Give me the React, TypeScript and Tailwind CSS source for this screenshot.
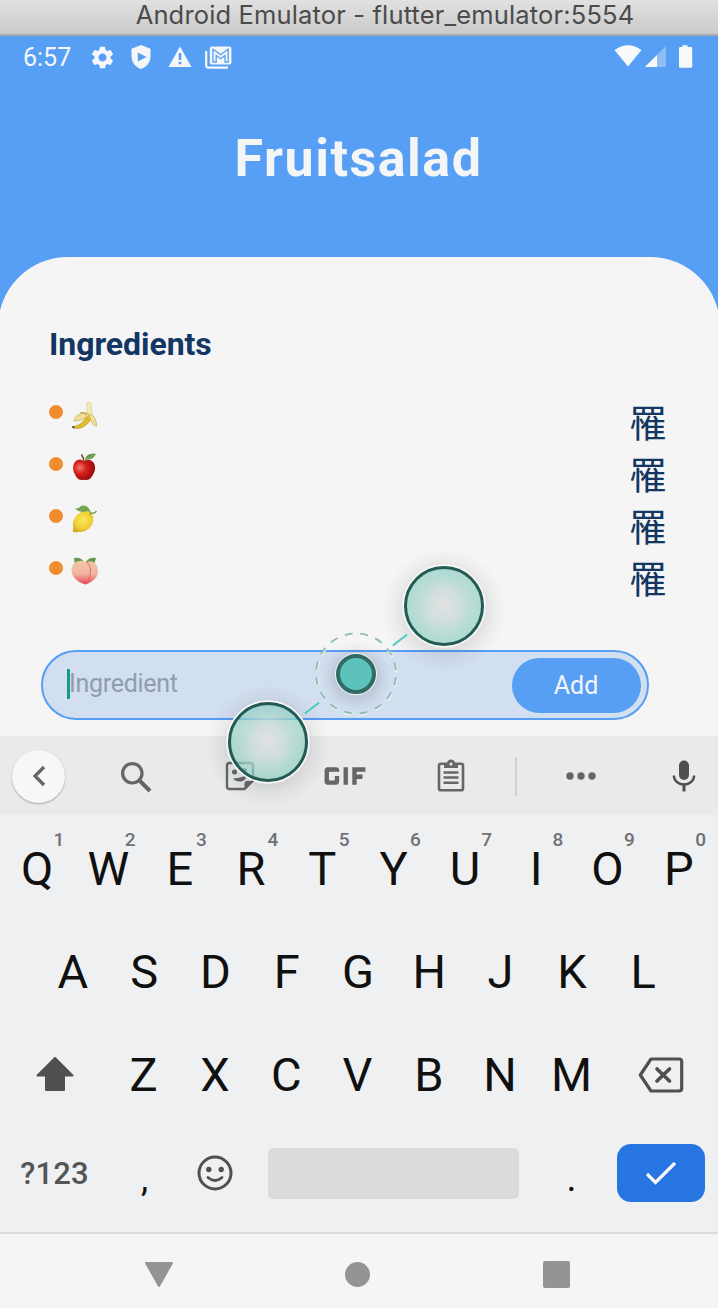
import React from "react";
import { MdSettings, MdGif } from "react-icons/md";

function Shield() {
  return (
    <svg width="22" height="26" viewBox="0 0 22 26">
      <path fillRule="evenodd" fill="#f4f6f8" d="M11 1 L20.5 4.8 V12 C20.5 18.5 16.5 23 11 25 C5.5 23 1.5 18.5 1.5 12 V4.8 Z M7.8 8.5 V17.5 L16.5 13 Z" />
    </svg>
  );
}

function Warning() {
  return (
    <svg width="24" height="22" viewBox="0 0 24 22">
      <path fill="#f4f6f8" d="M12 0.5 L23.5 21 H0.5 Z" />
      <path fill="#579ff5" d="M10.7 7 h2.6 v7 h-2.6 z M10.7 15.8 h2.6 v2.5 h-2.6 z" />
    </svg>
  );
}

function MailStack() {
  return (
    <svg width="27" height="23" viewBox="0 0 27 23" fill="none">
      <path d="M1.2 5 V19.5 Q1.2 21.7 3.4 21.7 H23" stroke="#f4f6f8" strokeWidth="2.2" />
      <rect x="4.8" y="0.5" width="21.6" height="18" rx="2" fill="#f4f6f8" />
      <path d="M8 16 V3.2 L15.6 8.8 L23.200 3.2 V16 H20 V9.500 L15.6 12.800 L11.200 9.500 V16 Z" stroke="#579ff5" strokeWidth="1.3" />
    </svg>
  );
}

function SignalIcons() {
  return (
    <svg width="80" height="26" viewBox="0 0 80 26" fill="#f8f9fa">
      <path d="M0.5 6 Q14 -3.5 27.5 6 L14 22.5 Z" />
      <path d="M31 23 L52 2 V23 Z" opacity="0.35" />
      <path d="M31 23 L43 11 V23 Z" />
      <path d="M68.5 1.3 h5 v1.7 h3.3 q1.4 0 1.4 1.4 v18 q0 1.4 -1.4 1.4 h-10.4 q-1.4 0 -1.4 -1.4 v-18 q0 -1.4 1.4 -1.4 h2.1 z" />
    </svg>
  );
}

function Banana() {
  return (
    <svg width="28" height="28" viewBox="0 0 28 28">
      <path d="M2 25.5 C10 25 14 19 18 11 L21 15 C19 22 11 30 2 26.8 Z" fill="#e3bd2c" stroke="#b08c22" strokeWidth=".6" />
      <path d="M16 1.6 Q18.3 0 20 2.3 L21 15 L15.8 14.5 Q16.5 8 16 1.6Z" fill="#f5eab0" stroke="#d8c875" strokeWidth=".6" />
      <path d="M17 12 Q11 11 7 14 Q3.5 16 3 20 Q9 20.5 14 17 L18.5 14Z" fill="#efdf96" stroke="#bda443" strokeWidth=".6" />
      <path d="M20 13 Q25 16 26 25.5 Q21 24.5 20 19 L18 15Z" fill="#eee09c" stroke="#c8ad4b" strokeWidth=".6" />
      <path d="M1.5 25 l2 .2 -.5 2 -1.7 -.3z" fill="#473a1c" />
      <path d="M9 12 Q13 10 16 14" fill="none" stroke="#b69632" />
    </svg>
  );
}

function Apple() {
  return (
    <svg width="28" height="28" viewBox="0 0 28 28">
      <defs>
        <radialGradient id="appleSkin" cx=".32" cy=".4" r=".7">
          <stop offset="0" stopColor="#ec7d75" />
          <stop offset=".4" stopColor="#d8211d" />
          <stop offset="1" stopColor="#930808" />
        </radialGradient>
      </defs>
      <path d="M12.5 8 Q7 4.500 3.500 9.500 Q-.2 16 5 23.500 Q7.500 27.800 12.500 26.700 Q18 28 20.500 24 Q26.500 15.500 22.500 9.500 Q19 4.700 12.500 8Z" fill="url(#appleSkin)" />
      <path d="M12.700 9.500 Q13 5 10.500 1.500" fill="none" stroke="#6d4428" strokeWidth="1.500" />
      <path d="M13.500 6.700 Q16 -.5 25 .8 Q22.500 7.500 13.500 6.700Z" fill="#639845" />
      <path d="M14 6.500 Q19 4.500 24 1.200" fill="none" stroke="#a4c78c" strokeWidth=".6" />
    </svg>
  );
}

function Lemon() {
  return (
    <svg width="28" height="28" viewBox="0 0 28 28">
      <defs>
        <radialGradient id="lemonSkin" cx=".5" cy=".42" r=".6">
          <stop offset="0" stopColor="#fae85e" />
          <stop offset=".7" stopColor="#efce32" />
          <stop offset="1" stopColor="#d6a81f" />
        </radialGradient>
      </defs>
      <path d="M20.500 7 Q25 17 18 23.500 Q13 28 8 26.800 Q5 27.800 2 26.800 Q1.500 25.500 2.300 23.500 Q.5 15 6.500 9.500 Q12 4.500 20.500 7Z" fill="url(#lemonSkin)" />
      <path d="M20 7.500 Q17 -.5 10.500 .8 Q8 3.500 4 3.700 Q9 8.500 14.500 6.500 Q17 5.500 20 7.500Z" fill="#77a554" />
      <path d="M19 7.500 Q23 9.500 25.500 6" fill="none" stroke="#77a554" strokeWidth="1.300" />
      <path d="M20 7.500 L18.500 10" stroke="#77a554" />
    </svg>
  );
}

function Peach() {
  return (
    <svg width="28" height="28" viewBox="0 0 28 28">
      <defs>
        <linearGradient id="peachSkin" x1="0" y1="0" x2="0" y2="1">
          <stop offset="0" stopColor="#f0c7a0" />
          <stop offset=".55" stopColor="#f0b5a2" />
          <stop offset="1" stopColor="#ea4055" />
        </linearGradient>
      </defs>
      <path d="M3 1 Q10 -.5 14 6 L4 8Z M25 1 Q18 0 15 5 L23 8Z" fill="#66984c" />
      <path d="M14 6 Q19 2.500 24 6 Q29 11 26 19 Q22 25 14.500 27.500Z" fill="url(#peachSkin)" />
      <path d="M15 5 Q9 2.500 4 5.500 Q-.8 10 1 17 Q5 25 14.500 27.500 Q19.500 22 19.500 14 Q19.500 7 15 5Z" fill="url(#peachSkin)" />
      <path d="M15 5 Q20 7.500 19.500 15 Q19 23 15 27" fill="none" stroke="#d8656a" strokeWidth=".9" />
    </svg>
  );
}

function SearchIcon() {
  return (
    <svg className="relative top-px" width="32" height="32" viewBox="0 0 32 32" fill="none" stroke="#656667" strokeWidth="3.2">
      <circle cx="12.300" cy="12.300" r="9.700" />
      <path d="M19.500 19.500 L30 30" strokeWidth="4" />
    </svg>
  );
}

function StickerIcon() {
  return (
    <svg width="30" height="30" viewBox="0 0 30 30">
      <path d="M4.500 2 H25 Q28 2 28 5 V19.500 L19.500 28 H4.500 Q2 28 2 25.500 V4.500 Q2 2 4.500 2Z" fill="none" stroke="#656667" strokeWidth="2.400" />
      <path d="M19.500 29 V22.500 Q19.500 20 22 20 H29Z" fill="#656667" />
      <circle cx="9.500" cy="11" r="2.500" fill="#656667" />
      <circle cx="19.500" cy="9.500" r="2.500" fill="#656667" />
      <path d="M8 17.500 Q15 17 22 14.500 Q20 20.500 15 20.500 Q10 20.500 8 17.500Z" fill="#656667" />
    </svg>
  );
}

function ClipboardIcon() {
  return (
    <svg width="28" height="34" viewBox="0 0 28 34">
      <rect x="2" y="4.800" width="24" height="26.500" rx="1.800" fill="none" stroke="#656667" strokeWidth="2.600" />
      <path d="M7 4 H10 Q10.500 .5 14 .5 Q17.500 .5 18 4 H21 V9 H7Z" fill="#656667" />
      <circle cx="14" cy="5" r="1.500" fill="#e8eaeb" />
      <path d="M6.500 13.400 H21.500 M6.500 18.600 H21.500 M6.500 23.800 H21.500" stroke="#656667" strokeWidth="2.500" />
    </svg>
  );
}

function MicIcon() {
  return (
    <svg width="24" height="32" viewBox="0 0 24 32" fill="none" stroke="#505050">
      <rect x="7" y="0.500" width="10" height="19.500" rx="5" fill="#505050" stroke="none" />
      <path d="M1.800 15.500 C2.500 27.500 21.500 27.500 22.200 15.500" strokeWidth="2.400" />
      <path d="M12 24 V31.500" strokeWidth="3" />
    </svg>
  );
}

function Toolbar() {
  return (
    <div className="grid h-[79px] shrink-0 grid-cols-[77px_117px_92px_118px_94px_35px_95px_21px_69px] items-center justify-items-center bg-[#e8eaeb] pt-px">
      <div className="flex h-[53px] w-[53px] items-center justify-center rounded-full bg-[#f7f7f7] shadow-[0_1px_2px_rgba(0,0,0,0.3)]">
        <svg width="14" height="22" viewBox="0 0 14 22" fill="none" stroke="#656667" strokeWidth="3.300">
          <path d="M12 2 L3 11 L12 20" />
        </svg>
      </div>
      <SearchIcon />
      <StickerIcon />
      <MdGif size={70} color="#656667" />
      <ClipboardIcon />
      <div className="h-[39px] w-[2px] bg-[#cfd1d2]" />
      <svg width="30" height="8" viewBox="0 0 30 8" fill="#656667">
        <circle cx="4" cy="4" r="3.700" />
        <circle cx="15" cy="4" r="3.700" />
        <circle cx="26" cy="4" r="3.700" />
      </svg>
      <span />
      <MicIcon />
    </div>
  );
}

function Key({ label, hint }: { label: string; hint?: string }) {
  return (
    <div className="relative flex h-full w-[71.3px] items-center justify-center text-[47px] leading-none text-[#101010]">
      {label}
      {hint && <span className="absolute left-[52px] top-[11px] text-[19px] font-medium leading-[24px] text-[#707172]">{hint}</span>}
    </div>
  );
}

function Keyboard() {
  return (
    <div className="flex h-[417px] shrink-0 flex-col bg-[#eef0f2] pt-[2px]">
      <div className="flex h-[103px] justify-center pr-[2px]">
        {"QWERTYUIOP".split("").map((k, i) => (
          <Key key={k} label={k} hint={String((i + 1) % 10)} />
        ))}
      </div>
      <div className="flex h-[103px] justify-center pr-[2px]">
        {"ASDFGHJKL".split("").map((k) => (
          <Key key={k} label={k} />
        ))}
      </div>
      <div className="flex h-[103px] items-center">
        <div className="flex w-[108px] justify-center pl-[1px]">
          <svg width="38" height="36" viewBox="0 0 38 36" fill="#505050" stroke="#505050" strokeWidth="2" strokeLinejoin="round">
            <path d="M19 1 L36.500 18.500 H28 V33 H10 V18.500 H1.500 Z" />
          </svg>
        </div>
        {"ZXCVBNM".split("").map((k) => (
          <Key key={k} label={k} />
        ))}
        <div className="flex flex-1 justify-center pr-[3px]">
          <svg width="46" height="36" viewBox="0 0 46 36" fill="none" stroke="#505050" strokeWidth="3.200" strokeLinejoin="round">
            <path d="M13 2 H41 Q43.700 2 43.700 4.700 V31.300 Q43.700 34 41 34 H13 L2.300 18 Z" />
            <path d="M19 12 L31.500 24 M31.500 12 L19 24" strokeWidth="3.700" strokeLinecap="round" />
          </svg>
        </div>
      </div>
      <div className="flex h-[94px] items-center">
        <div className="w-[109px] pt-[2px] text-center text-[31px] font-medium tracking-[0.1px] text-[#555]">?123</div>
        <div className="w-[71px] pt-[11px] text-center text-[36px] leading-none text-[#101010]">,</div>
        <div className="flex w-[70px] justify-center">
          <svg width="36" height="36" viewBox="0 0 36 36" fill="none" stroke="#505050" strokeWidth="3">
            <circle cx="18" cy="18" r="16" />
            <circle cx="11.800" cy="14.500" r="2.700" fill="#505050" stroke="none" />
            <circle cx="24.200" cy="14.500" r="2.700" fill="#505050" stroke="none" />
            <path d="M11 22.500 Q18 28.500 25 22.500" strokeLinecap="round" strokeWidth="2.800" />
          </svg>
        </div>
        <div className="ml-[18px] h-[51px] w-[251px] rounded-[5px] bg-[#dadcdb]" />
        <div className="w-[98px] pl-[7px] pt-[10px] text-center text-[38px] leading-none text-[#101010]">.</div>
        <div className="flex h-[58px] w-[88px] items-center justify-center rounded-[14px] bg-[#2775e1]">
          <svg width="32" height="24" viewBox="0 0 32 24" fill="none" stroke="#f7f9fb" strokeWidth="3.200">
            <path d="M2 13 L10.500 21.500 L30 2" />
          </svg>
        </div>
      </div>
    </div>
  );
}

function TouchOverlay() {
  return (
    <svg className="pointer-events-none absolute left-[190px] top-[530px]" width="340" height="290" viewBox="190 530 340 290" fill="none">
      <defs>
        <radialGradient id="touchFill">
          <stop offset="0" stopColor="#e0e0e2" stopOpacity=".95" />
          <stop offset=".45" stopColor="#c9dcd9" stopOpacity=".88" />
          <stop offset="1" stopColor="#86cdbf" stopOpacity=".65" />
        </radialGradient>
        <radialGradient id="touchShade">
          <stop offset=".6" stopColor="#24252b" stopOpacity=".11" />
          <stop offset=".8" stopColor="#24252b" stopOpacity=".04" />
          <stop offset="1" stopColor="#24252b" stopOpacity="0" />
        </radialGradient>
        <mask id="shadeMask">
          <rect x="190" y="530" width="340" height="290" fill="white" />
          <circle cx="444" cy="606" r="39" fill="black" />
          <circle cx="268" cy="742" r="39" fill="black" />
        </mask>
      </defs>
      <g mask="url(#shadeMask)">
        <circle cx="444" cy="610" r="62" fill="url(#touchShade)" />
        <circle cx="268" cy="746" r="62" fill="url(#touchShade)" />
      </g>
      <circle cx="356" cy="677" r="36" fill="url(#touchShade)" />
      <circle cx="356.500" cy="674.500" r="40" stroke="#f5f5f5" strokeWidth="3" strokeDasharray="8.500 7.260" strokeDashoffset="-4" opacity=".7" />
      <circle cx="356" cy="673.500" r="40" stroke="#8dbab2" strokeWidth="1.800" strokeDasharray="8 7.708" strokeDashoffset="-4" />
      <path d="M393.500 645 L406.500 635 M305.500 713 L318.500 703" stroke="#4bcbbb" strokeWidth="2" strokeLinecap="round" />
      {[
        [444, 606],
        [268, 742],
      ].map(([x, y]) => (
        <g key={x}>
          <circle cx={x} cy={y} r="38.500" fill="url(#touchFill)" />
          <circle cx={x} cy={y} r="40.700" stroke="#f8f8f8" strokeWidth="2" />
          <circle cx={x} cy={y} r="38.500" stroke="#235a53" strokeWidth="3" />
        </g>
      ))}
      <circle cx="356" cy="674" r="21" fill="#f5f5f5" />
      <circle cx="356" cy="674" r="18" fill="#5dc2bc" stroke="#316b65" strokeWidth="4" />
    </svg>
  );
}

const fruits = [Banana, Apple, Lemon, Peach];

export default function App() {
  return (
    <div className="relative flex h-[1308px] w-[718px] flex-col overflow-hidden bg-[#579ff5] font-['Roboto',sans-serif]">
      <div className="flex h-[36px] shrink-0 items-center justify-center border-b-2 border-[#a9a9ab] bg-gradient-to-b from-[#e1e1e1] to-[#cacaca] pl-[52px] pb-[4px]">
        <span className="whitespace-nowrap font-['Inter',sans-serif] text-[25.5px] leading-none tracking-[0.15px] text-[#4b4b4b]">Android Emulator - flutter_emulator:5554</span>
      </div>

      <div className="flex h-[42px] shrink-0 items-center pl-[23px] pr-[24px] text-[#f5f7fa]">
        <span className="w-[66px] pt-px text-[25px] leading-none">6:57</span>
        <MdSettings size={27} />
        <span className="ml-[14px]"><Shield /></span>
        <span className="ml-[16px]"><Warning /></span>
        <span className="ml-[13px]"><MailStack /></span>
        <span className="ml-auto"><SignalIcons /></span>
      </div>

      <h1 className="h-[179px] shrink-0 pt-[50px] pr-px text-center text-[52px] font-bold leading-[61px] tracking-[1.5px] text-[#f4f5f7]">Fruitsalad</h1>

      <main className="-mx-[2px] flex h-[479px] shrink-0 flex-col rounded-t-[70px] bg-[#f5f5f5] px-[51px] pt-[68px]">
        <h2 className="h-[65px] text-[32px] font-bold leading-[38px] tracking-[-0.05px] text-[#123763]">Ingredients</h2>
        <ul className="h-[260px]">
          {fruits.map((Fruit, i) => (
            <li key={i} className="flex h-[52px] items-start justify-between">
              <div className="flex pt-[11px]">
                <span className="mt-[4px] h-[14px] w-[14px] rounded-full bg-[#f08d30]" />
                <span className="ml-[8px]"><Fruit /></span>
              </div>
              <span className="mr-[2px] mt-[12px] font-['Noto_Sans_CJK_SC',sans-serif] text-[38px] leading-[38px] text-[#123763]">罹</span>
            </li>
          ))}
        </ul>
        <div className="-ml-[8px] flex h-[70px] w-[608px] items-center justify-between rounded-full border-2 border-[#559df5] bg-[#d2dff0] pl-[24px] pr-[6px]">
          <div className="flex items-center pb-[3px]">
            <span className="h-[30px] w-[3px] bg-[#149b89]" />
            <span className="-ml-[1px] text-[25px] leading-none tracking-[-0.3px] text-[#8f9daf]">Ingredient</span>
          </div>
          <button className="h-[55px] w-[129px] rounded-full bg-[#579ff5] pr-[1px] text-[25px] leading-none text-[#f4f6f9]">Add</button>
        </div>
      </main>

      <Toolbar />
      <Keyboard />

      <nav className="grid h-[76px] shrink-0 grid-cols-[59px_199px_199px_199px] items-center justify-items-center border-t-2 border-[#d9dadb] bg-[#f5f5f5] pt-[6px]">
        <span />
        <svg width="30" height="27" viewBox="0 0 30 27" fill="#949494" stroke="#949494" strokeWidth="2" strokeLinejoin="round">
          <path d="M2 2 H28 L15 25 Z" />
        </svg>
        <span className="h-[25px] w-[25px] rounded-full bg-[#949494]" />
        <span className="h-[27px] w-[27px] rounded-[2px] bg-[#949494]" />
      </nav>

      <TouchOverlay />
    </div>
  );
}
